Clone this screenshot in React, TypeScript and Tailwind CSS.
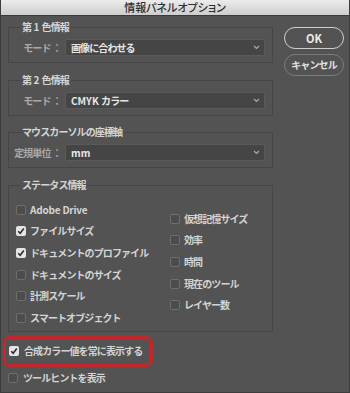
import type { ReactNode } from "react";

const font = {
  fontFamily: '"Noto Sans CJK JP", "Noto Sans", sans-serif',
};

function Check({ checked }: { checked?: boolean }) {
  return checked ? (
    <span className="flex h-[10px] w-[10px] shrink-0 items-center justify-center rounded-[2px] bg-[#e4e4e4]">
      <svg width="8" height="8" viewBox="0 0 8 8">
        <path d="M1.2 4.2 L3.2 6.2 L6.8 1.6" fill="none" stroke="#2c2c2c" strokeWidth="1.6" />
      </svg>
    </span>
  ) : (
    <span className="h-[10px] w-[10px] shrink-0 rounded-[2px] border border-[#6e6e6e] bg-[#4c4c4c]" />
  );
}

function Item({ label, checked }: { label: ReactNode; checked?: boolean }) {
  return (
    <div className="flex h-[21.6px] items-center gap-[4px]">
      <Check checked={checked} />
      <span className="whitespace-nowrap font-bold leading-none text-[#d4d4d4]">{label}</span>
    </div>
  );
}

function Group({ title, children, className }: { title: ReactNode; children: ReactNode; className?: string }) {
  return (
    <fieldset className={"w-[265px] border border-[#464646] " + (className ?? "")}>
      <legend className="ml-[12px] h-[12px] whitespace-pre px-[1px] font-bold leading-[12px] text-[#d4d4d4]">
        {title}
      </legend>
      {children}
    </fieldset>
  );
}

function SelectRow({ label, value }: { label: string; value: ReactNode }) {
  return (
    <div className="mt-[6px] flex items-center pb-[6px] pr-[7px]">
      <span className="w-[52px] whitespace-pre text-right font-bold leading-none text-[#a9a9a9]">{label}</span>
      <div className="ml-[4px] flex h-[17px] flex-1 items-center justify-between rounded-[2px] border border-[#5a5a5a] bg-[#454545] pl-[5px] pr-[4px]">
        <span className="whitespace-pre font-bold leading-none text-[#e6e6e6]">{value}</span>
        <svg width="7" height="5" viewBox="0 0 7 5">
          <path d="M1 1 L3.5 3.5 L6 1" fill="none" stroke="#a8a8a8" strokeWidth="1.2" />
        </svg>
      </div>
    </div>
  );
}

export default function App() {
  return (
    <div
      className="flex h-[393px] w-[350px] flex-col overflow-hidden border-x border-b border-[#3c3c3c] bg-[#535353] text-[10px] tracking-[-0.9px]"
      style={font}
    >
      <div className="flex h-[16px] shrink-0 items-center justify-center border-b border-[#3a3a3a] bg-gradient-to-b from-[#ececec] to-[#cdcdcd]">
        <span className="text-[11px] font-medium leading-none tracking-normal text-[#2e2e2e] [font-feature-settings:'palt']">
          情報パネルオプション
        </span>
      </div>

      <div className="flex">
        <div className="pl-[7px] pt-[5px]">
          <Group title={<>第<span className="tracking-normal"> 1 </span>色情報</>}>
            <SelectRow label="モード ：" value="画像に合わせる" />
          </Group>
          <Group title={<>第<span className="tracking-normal"> 2 </span>色情報</>} className="mt-[11px]">
            <SelectRow label="モード ：" value={<><span className="tracking-normal">CMYK </span>カラー</>} />
          </Group>
          <Group title="マウスカーソルの座標軸" className="mt-[10px]">
            <SelectRow label="定規単位 ：" value={<span className="tracking-normal">mm</span>} />
          </Group>
          <Group title="ステータス情報" className="mt-[11px]">
            <div className="flex pb-[2px] pl-[7px]">
              <div className="mt-[8px] w-[154px]">
                <Item label={<span className="tracking-[-0.2px]">Adobe Drive</span>} />
                <Item label="ファイルサイズ" checked />
                <Item label="ドキュメントのプロファイル" checked />
                <Item label="ドキュメントのサイズ" />
                <Item label="計測スケール" />
                <Item label="スマートオブジェクト" />
              </div>
              <div className="mt-[17px]">
                <Item label="仮想記憶サイズ" />
                <Item label="効率" />
                <Item label="時間" />
                <Item label="現在のツール" />
                <Item label="レイヤー数" />
              </div>
            </div>
          </Group>
        </div>

        <div className="ml-[11px] flex flex-col gap-[5px] pt-[11px]">
          <button className="h-[22px] w-[60px] rounded-full border-[1.5px] border-[#cfcfcf] text-[11px] font-bold leading-none tracking-normal text-[#ececec]">
            OK
          </button>
          <button className="h-[22px] w-[60px] rounded-full border border-[#7c7c7c] font-bold leading-none text-[#e0e0e0]">
            キャンセル
          </button>
        </div>
      </div>

      <div className="pl-[2px]">
        <div className="mt-[4px] flex h-[31px] w-[150px] items-center gap-[5px] rounded-[7px] border-[3px] border-[#c1272d] pl-[3px]">
          <Check checked />
          <span className="whitespace-nowrap font-bold leading-none text-[#d4d4d4]">合成カラー値を常に表示する</span>
        </div>
        <div className="mt-[1px] flex h-[21px] items-center gap-[5px] pl-[5px]">
          <Check />
          <span className="whitespace-nowrap font-bold leading-none text-[#d4d4d4]">ツールヒントを表示</span>
        </div>
      </div>
    </div>
  );
}
